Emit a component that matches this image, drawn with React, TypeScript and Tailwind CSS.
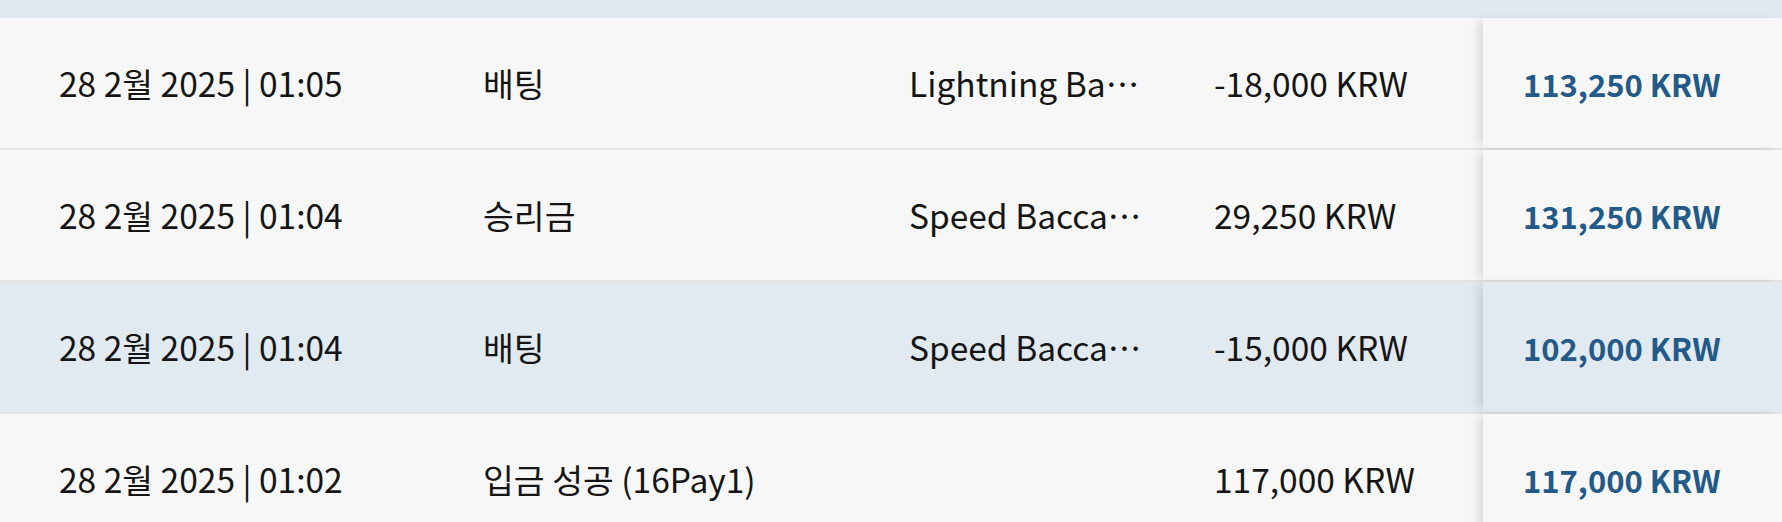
import React from 'react'

type Row = {
  date: string
  type: string
  game: string
  amount: string
  balance: string
  active?: boolean
}

const ROWS: Row[] = [
  { date: '28 2월 2025 | 01:05', type: '배팅', game: 'Lightning Baccarat', amount: '-18,000 KRW', balance: '113,250 KRW' },
  { date: '28 2월 2025 | 01:04', type: '승리금', game: 'Speed Baccarat A', amount: '29,250 KRW', balance: '131,250 KRW' },
  { date: '28 2월 2025 | 01:04', type: '배팅', game: 'Speed Baccarat A', amount: '-15,000 KRW', balance: '102,000 KRW', active: true },
  { date: '28 2월 2025 | 01:02', type: '입금 성공 (16Pay1)', game: '', amount: '117,000 KRW', balance: '117,000 KRW' },
]

function HistoryRow({ row }: { row: Row }) {
  const bg = row.active ? 'bg-[#e1e9f1]' : 'bg-[#f7f7f7]'
  return (
    <div className={`flex h-[132px] items-stretch border-b-2 border-[#e4e4e4] ${bg}`}>
      <div className="flex w-[1483px] items-center">
        <div className="w-[483px] shrink-0 pl-[59px] whitespace-pre">{row.date}</div>
        <div className="w-[426px] shrink-0">{row.type}</div>
        <div className="w-[305px] shrink-0 pr-[68px]">
          <div className="truncate py-2 leading-none">{row.game}</div>
        </div>
        <div className="w-[269px] shrink-0">{row.amount}</div>
      </div>
      <div className={`flex flex-1 items-center pl-[40px] text-[31px] font-semibold text-[#235a89] shadow-[-7px_0_10px_-3px_rgba(0,0,0,0.13)] ${bg}`}>
        {row.balance}
      </div>
    </div>
  )
}

export default function App() {
  return (
    <div
      className="h-[522px] w-full overflow-hidden bg-[#f7f7f7] text-[33.5px] leading-none text-[#151515]"
      style={{ fontFamily: '"Noto Sans CJK KR", "Noto Sans", sans-serif' }}
    >
      <div className="h-[18px] bg-[#e1e8f0]" />
      {ROWS.map((r, i) => (
        <HistoryRow key={i} row={r} />
      ))}
    </div>
  )
}
